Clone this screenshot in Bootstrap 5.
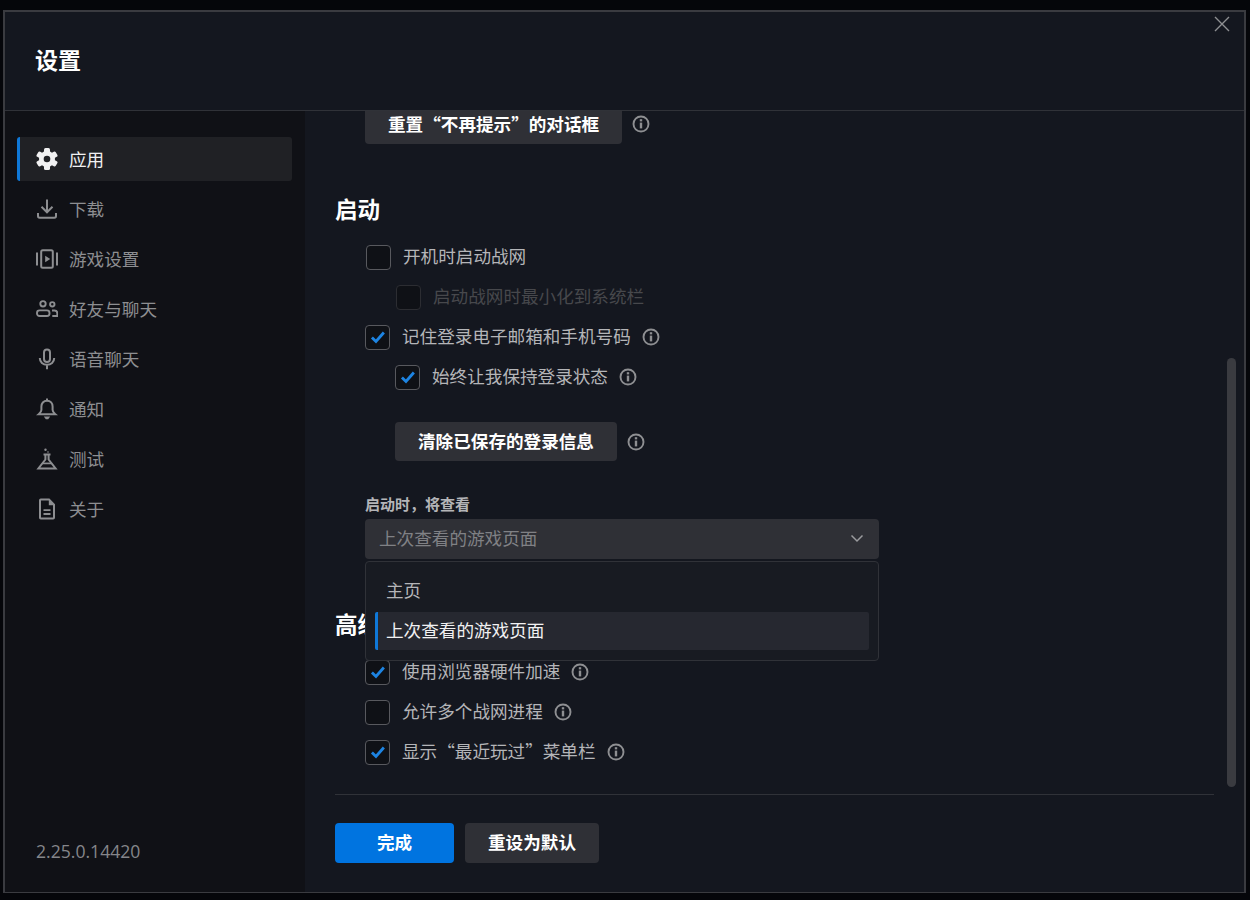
<!DOCTYPE html>
<html lang="zh-CN">
<head>
<meta charset="utf-8">
<title>设置</title>
<link rel="stylesheet" href="https://cdn.jsdelivr.net/npm/bootstrap@5.3.0/dist/css/bootstrap.min.css">
<style>
html,body{height:100%}
body{background:#05060a;font-family:"Noto Sans CJK SC","Noto Sans",sans-serif;font-size:17.6px;color:#b4b5b8;overflow:hidden}
.shell{margin:10px 3px 7px;height:883px;width:1243px;background:#14171f;border:2px solid #3a3b40;border-bottom-width:1px;position:relative}
.shell-x{position:absolute;top:3px;right:13px;width:18px;height:18px;color:#8e8f92;background:none;border:0;padding:0;line-height:0}
.shell-head{height:99px;padding:0 0 4px 30px;border-bottom:1px solid #303238;flex:none}
.shell-head h1{font-size:23px;font-weight:700;color:#fff;margin:0;line-height:32px}
.side{width:300px;background:#101116;padding:26px 13px 0 12px;flex:none}
.side .nav-link{height:44px;margin-bottom:6px;padding:0 0 0 16px;color:#8d8e91;display:flex;align-items:center;gap:11px;font-size:17.6px;border-left:3px solid transparent;border-radius:3px}
.side .nav-link.on{background:#202125;color:#f1f1f2;border-left-color:#0f78d8}
.side .nav-link svg{width:22px;height:22px;flex:none}
.ver{font-family:"Open Sans",sans-serif;font-size:17.6px;color:#85868a;padding:0 0 29px 19px;line-height:24px}
.pane{position:relative;overflow:hidden;min-height:0}
.flowbox{margin-top:-7px;padding-left:30px}
.act{background:#2f3036;color:#fff;font-weight:700;font-size:17.6px;border:0;border-radius:4px;height:40px;padding:0 23px 2px;line-height:38px;white-space:nowrap}
.act.low{padding-bottom:0}
.act.snug{height:39px}
.act:hover{background:#2f3036;color:#fff}
.act.go{background:#0074e0;width:119px;padding:0 0 2px}
.act.go:hover{background:#0074e0}
.sect{font-size:22.500px;font-weight:700;color:#fff;line-height:33px;margin:48px 0 12px}
.sect.second{margin:48px 0 12px}
.chk{height:40px;gap:12px;padding-left:30px;line-height:24px}
.chk.sub{padding-left:60px}
.chk.nudge{padding-left:31px}
.chk.sub.nudge{padding-left:61px}
.chk .form-check-input{width:25px;height:25px;margin:0;flex:none;background-color:#0f1116;border:1.5px solid #58595e;border-radius:4px;box-shadow:none}
.chk .form-check-input:checked{background-color:#0f1116;background-size:18px 18px;background-image:url("data:image/svg+xml,%3csvg xmlns='http://www.w3.org/2000/svg' viewBox='0 0 16 16'%3e%3cpath fill='none' stroke='%231d84e2' stroke-width='2.500' d='M2.600 8.400l3.600 3.600 7-8'/%3e%3c/svg%3e")}
.chk .form-check-input:disabled{opacity:1;border-color:#2c2d32}
.chk label{color:#b4b5b8;white-space:nowrap;padding-bottom:2px}
.chk.off label{color:#47484c}
.hint{width:18px;height:18px;flex:none;color:#8e8f92;margin-left:-1px}
.act-row{gap:11px}
.field-cap{font-size:15px;font-weight:700;color:#b4b5b8;line-height:20px;margin:33px 0 4px 30px}
.pick{position:relative;width:514px;margin-left:30px;margin-top:5px}
.pick-btn{height:40px;width:100%;background:#2f3036;border:0;border-radius:4px;color:#808185;font-size:17.6px;padding:0 15px 2px 14px;line-height:36px}
.pick-btn svg{width:14px;height:14px;color:#9a9b9e}
.pick .dropdown-menu{position:absolute;top:42px;left:0;width:514px;background:#181b22;border:1px solid #303238;border-radius:4px;padding:10px 9px;margin:0;z-index:5}
.pick .dropdown-item{height:38px;line-height:36px;padding:0 0 0 8px;border-left:3px solid transparent;border-radius:2px;color:#b4b5b8;font-size:17.6px;margin-bottom:2px}
.pick .dropdown-item:last-child{margin-bottom:0}
.pick .dropdown-item.active{background:#262830;color:#f1f1f2;border-left-color:#0f78d8}
.rail{position:absolute;right:8px;top:247px;width:9px;height:429px;border-radius:5px;background:#3a3b40}
.foot{margin:0 30px;border-top:1px solid #303238;padding:28px 0 29px;gap:11px;flex:none}
</style>
</head>
<body>
<div class="shell d-flex flex-column">
  <button class="shell-x" type="button" aria-label="关闭"><svg width="18" height="18" viewBox="0 0 18 18" fill="none" stroke="currentColor" stroke-width="1.400"><path d="M2 2l14 14M16 2L2 16"/></svg></button>
  <header class="shell-head d-flex align-items-center"><h1>设置</h1></header>
  <div class="d-flex flex-grow-1" style="min-height:0">
    <aside class="side d-flex flex-column">
      <nav class="nav flex-column flex-grow-1">
        <a class="nav-link on" href="#"><svg viewBox="0 0 22 22" fill="currentColor"><g transform="translate(11 11)"><rect x="-3" y="-11" width="6" height="22" rx="1.500"/><rect x="-3" y="-11" width="6" height="22" rx="1.500" transform="rotate(60)"/><rect x="-3" y="-11" width="6" height="22" rx="1.500" transform="rotate(120)"/><circle r="8"/><circle r="3.300" fill="#202125"/></g></svg><span>应用</span></a>
        <a class="nav-link" href="#"><svg viewBox="0 0 22 22" fill="none" stroke="currentColor" stroke-width="2"><path d="M11 1.500v12.500M5.500 8.800l5.500 5.500 5.500-5.500M2 15v3c0 1 .6 1.800 1.600 1.800h14.800c1 0 1.600-.8 1.600-1.800v-3"/></svg><span>下载</span></a>
        <a class="nav-link" href="#"><svg viewBox="0 0 22 22" fill="none" stroke="currentColor" stroke-width="2"><path d="M1 4.500v13M21 4.500v13"/><rect x="5.200" y="2.200" width="11.600" height="17.600" rx="1.500"/><path d="M9.200 7.700l5 3.300-5 3.300z" fill="currentColor" stroke="none"/></svg><span>游戏设置</span></a>
        <a class="nav-link" href="#"><svg viewBox="0 0 22 22" fill="none" stroke="currentColor" stroke-width="1.900"><circle cx="7" cy="5.800" r="2.700"/><circle cx="16.300" cy="6.300" r="2.200"/><rect x="1" y="12.400" width="12.500" height="5.600" rx="2.500"/><path d="M16 12.500h2.500c1.700 0 2.800 1.100 2.800 2.700v2.800h-5"/></svg><span>好友与聊天</span></a>
        <a class="nav-link" href="#"><svg viewBox="0 0 22 22" fill="none" stroke="currentColor" stroke-width="2"><rect x="8" y="1.500" width="6" height="12.500" rx="3"/><path d="M3.800 10c0 4 3.200 6.800 7.200 6.800s7.200-2.800 7.200-6.800M11 16.800v4.500"/></svg><span>语音聊天</span></a>
        <a class="nav-link" href="#"><svg viewBox="0 0 22 22" fill="none" stroke="currentColor" stroke-width="2"><path d="M11 2.800c-3.600 0-5.600 2.500-5.600 5.800v3.400c0 1.500-.9 2.700-2.700 4.200h16.600c-1.800-1.500-2.700-2.700-2.700-4.200V8.600c0-3.300-2-5.800-5.600-5.800z"/><path d="M11 .4v2.400" /><path d="M7.800 18.600h6.400l-2 2.600h-2.400z" fill="currentColor" stroke="none"/></svg><span>通知</span></a>
        <a class="nav-link" href="#"><svg viewBox="0 0 22 22" fill="none" stroke="currentColor" stroke-width="2"><path d="M7.500 6.500h7M9.400 6.500v5L2.400 20.400h17.200L12.600 11.500v-5"/><path d="M6.500 15.400h9" stroke-width="1.700"/><circle cx="9.500" cy="1.700" r="1.200" fill="currentColor" stroke="none"/><circle cx="12" cy="4" r=".8" fill="currentColor" stroke="none"/></svg><span>测试</span></a>
        <a class="nav-link" href="#"><svg viewBox="0 0 22 22" fill="none" stroke="currentColor" stroke-width="2"><path d="M4 2.200c0-.5.3-.8.8-.8h8.200l5 5.200v13.200c0 .5-.3.8-.8.8H4.800c-.5 0-.8-.3-.8-.8z"/><path d="M12.800 1.400l5.200 5.800h-5.200z" fill="currentColor" stroke="none"/><path d="M7.500 12.200h7M7.500 16h7" stroke-width="1.800"/></svg><span>关于</span></a>
      </nav>
      <div class="ver">2.25.0.14420</div>
    </aside>
    <main class="flex-grow-1 d-flex flex-column" style="min-width:0">
      <div class="pane flex-grow-1">
        <div class="flowbox">
          <div class="d-flex align-items-center act-row" style="padding-left:30px">
            <button class="btn act low" type="button">重置“不再提示”的对话框</button>
            <svg class="hint"  viewBox="0 0 18 18"><use href="#ii"/></svg>
          </div>
          <h2 class="sect">启动</h2>
          <div class="chk nudge d-flex align-items-center"><input class="form-check-input" type="checkbox" id="c1"><label for="c1">开机时启动战网</label></div>
          <div class="chk sub nudge off d-flex align-items-center"><input class="form-check-input" type="checkbox" id="c2" disabled><label for="c2">启动战网时最小化到系统栏</label></div>
          <div class="chk d-flex align-items-center"><input class="form-check-input" type="checkbox" id="c3" checked><label for="c3">记住登录电子邮箱和手机号码</label><svg class="hint" viewBox="0 0 18 18"><use href="#ii"/></svg></div>
          <div class="chk sub d-flex align-items-center"><input class="form-check-input" type="checkbox" id="c4" checked><label for="c4">始终让我保持登录状态</label><svg class="hint" viewBox="0 0 18 18"><use href="#ii"/></svg></div>
          <div class="d-flex align-items-center act-row" style="padding-left:60px;margin-top:25px">
            <button class="btn act snug" type="button">清除已保存的登录信息</button>
            <svg class="hint" viewBox="0 0 18 18"><use href="#ii"/></svg>
          </div>
          <div class="field-cap">启动时，将查看</div>
          <div class="pick">
            <div class="pick-btn d-flex align-items-center justify-content-between"><span>上次查看的游戏页面</span><svg viewBox="0 0 14 14" fill="none" stroke="currentColor" stroke-width="1.500"><path d="M1.500 4.500L7 10l5.500-5.500"/></svg></div>
            <div class="dropdown-menu show">
              <a class="dropdown-item" href="#">主页</a>
              <a class="dropdown-item active" href="#">上次查看的游戏页面</a>
            </div>
          </div>
          <h2 class="sect second">高级</h2>
          <div class="chk d-flex align-items-center"><input class="form-check-input" type="checkbox" id="c5" checked><label for="c5">使用浏览器硬件加速</label><svg class="hint" viewBox="0 0 18 18"><use href="#ii"/></svg></div>
          <div class="chk d-flex align-items-center"><input class="form-check-input" type="checkbox" id="c6"><label for="c6">允许多个战网进程</label><svg class="hint" viewBox="0 0 18 18"><use href="#ii"/></svg></div>
          <div class="chk d-flex align-items-center"><input class="form-check-input" type="checkbox" id="c7" checked><label for="c7">显示“最近玩过”菜单栏</label><svg class="hint" viewBox="0 0 18 18"><use href="#ii"/></svg></div>
        </div>
        <div class="rail"></div>
      </div>
      <footer class="foot d-flex">
        <button class="btn act go" type="button">完成</button>
        <button class="btn act" type="button">重设为默认</button>
      </footer>
    </main>
  </div>
</div>
<svg width="0" height="0" class="position-absolute"><defs><g id="ii"><circle cx="9" cy="9" r="7.500" fill="none" stroke="currentColor" stroke-width="1.900"/><rect x="7.800" y="7.600" width="2.400" height="5.800" fill="currentColor"/><rect x="7.800" y="4.200" width="2.400" height="2.200" fill="currentColor"/></g></defs></svg>
<script src="https://cdn.jsdelivr.net/npm/bootstrap@5.3.0/dist/js/bootstrap.bundle.min.js"></script>
</body>
</html>
